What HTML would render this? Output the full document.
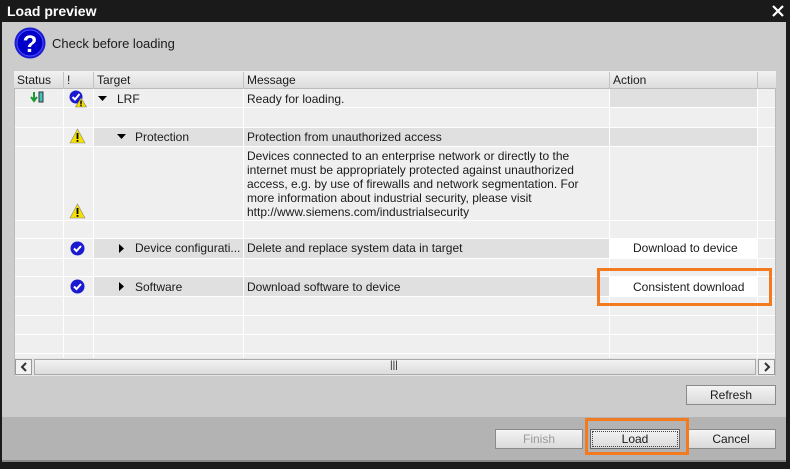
<!DOCTYPE html>
<html><head><meta charset="utf-8"><style>
*{margin:0;padding:0;box-sizing:border-box}
body{width:790px;height:469px;overflow:hidden;background:#1a1a1a;font-family:"Liberation Sans",sans-serif;font-size:12px;color:#1a1a1a;position:relative}
.a{position:absolute}
.t{white-space:nowrap}
.btn{position:absolute;height:20px;border:1px solid #8a8a8a;background:linear-gradient(#f4f4f4,#dadada);text-align:center;line-height:18px;font-size:12px}
</style></head><body>
<div class="a" style="left:0;top:0;width:790px;height:22px;background:#1a1a1a"></div>
<div class="a t" style="left:7px;top:3px;color:#fff;font-weight:bold;font-size:14px">Load preview</div>
<svg class="a" style="left:770px;top:3px" width="16" height="16"><path d="M3 3L13 13M13 3L3 13" stroke="#fff" stroke-width="2.2"/></svg>
<div class="a" style="left:2px;top:22px;width:784px;height:395px;background:#cccccc"></div>
<div class="a" style="left:2px;top:417px;width:784px;height:43px;background:#b3b3b3"></div>
<div class="a" style="left:2px;top:460px;width:784px;height:2px;background:#888"></div>
<svg class="a" style="left:14px;top:27px" width="32" height="32"><circle cx="16" cy="16" r="15.5" fill="#1a1ad0"/><circle cx="16" cy="16" r="13" fill="#0000c8" stroke="#5050ff" stroke-width="1"/><text x="16" y="25" font-family="Liberation Sans" font-weight="bold" font-size="24" fill="#fff" text-anchor="middle">?</text></svg>
<div class="a t" style="left:52px;top:36px;font-size:13px">Check before loading</div>
<!-- table -->
<div class="a" style="left:14px;top:71px;width:762px;height:305px;background:#efefef;border:1px solid #bbb"></div>
<div class="a" style="left:14px;top:71px;width:762px;height:18px;background:linear-gradient(#f2f2f2,#dcdcdc);border-bottom:1px solid #bbb"></div>
<div class="a t" style="left:17px;top:73px">Status</div>
<div class="a t" style="left:67px;top:73px">!</div>
<div class="a t" style="left:97px;top:73px">Target</div>
<div class="a t" style="left:247px;top:73px">Message</div>
<div class="a t" style="left:613px;top:73px">Action</div>
<!-- shaded rows -->
<div class="a" style="left:93px;top:128px;width:664px;height:18px;background:#e0e0e0"></div>
<div class="a" style="left:93px;top:89px;width:516px;height:18px;background:#efefef"></div>
<div class="a" style="left:609px;top:89px;width:148px;height:18px;background:#e0e0e0"></div>
<div class="a" style="left:93px;top:239px;width:664px;height:19px;background:#e0e0e0"></div>
<div class="a" style="left:93px;top:277px;width:664px;height:19px;background:#e0e0e0"></div>
<div class="a" style="left:609px;top:239px;width:148px;height:19px;background:#fff"></div>
<div class="a" style="left:609px;top:277px;width:148px;height:19px;background:#fff"></div>
<!-- row lines -->
<div class="a" style="left:15px;top:107px;width:760px;height:1px;background:#fff"></div>
<div class="a" style="left:15px;top:127px;width:760px;height:1px;background:#fff"></div>
<div class="a" style="left:15px;top:146px;width:760px;height:1px;background:#fff"></div>
<div class="a" style="left:15px;top:220px;width:760px;height:1px;background:#fff"></div>
<div class="a" style="left:15px;top:238px;width:760px;height:1px;background:#fff"></div>
<div class="a" style="left:15px;top:258px;width:760px;height:1px;background:#fff"></div>
<div class="a" style="left:15px;top:276px;width:760px;height:1px;background:#fff"></div>
<div class="a" style="left:15px;top:296px;width:760px;height:1px;background:#fff"></div>
<div class="a" style="left:15px;top:315px;width:760px;height:1px;background:#fff"></div>
<div class="a" style="left:15px;top:334px;width:760px;height:1px;background:#fff"></div>
<div class="a" style="left:15px;top:353px;width:760px;height:1px;background:#fff"></div>
<!-- col lines -->
<div class="a" style="left:63px;top:72px;width:1px;height:286px;background:#fff"></div>
<div class="a" style="left:93px;top:72px;width:1px;height:286px;background:#fff"></div>
<div class="a" style="left:243px;top:72px;width:1px;height:286px;background:#fff"></div>
<div class="a" style="left:609px;top:72px;width:1px;height:286px;background:#fff"></div>
<div class="a" style="left:757px;top:72px;width:1px;height:286px;background:#fff"></div>
<div class="a" style="left:63px;top:72px;width:1px;height:17px;background:#c4c4c4"></div>
<div class="a" style="left:93px;top:72px;width:1px;height:17px;background:#c4c4c4"></div>
<div class="a" style="left:243px;top:72px;width:1px;height:17px;background:#c4c4c4"></div>
<div class="a" style="left:609px;top:72px;width:1px;height:17px;background:#c4c4c4"></div>
<div class="a" style="left:757px;top:72px;width:1px;height:17px;background:#c4c4c4"></div>
<!-- icons -->
<svg class="a" style="left:30px;top:91px" width="14" height="14"><path d="M4 1V9M1 6L4 10L7 6" stroke="#1a9a30" stroke-width="2" fill="none"/><rect x="9" y="1" width="4" height="10" fill="#40c0c0" stroke="#333" stroke-width="1"/></svg>
<svg class="a" style="left:69px;top:90px" width="18" height="18"><circle cx="7" cy="7" r="6.5" fill="#1a1ad0"/><path d="M3.5 7L6 9.5L10.5 4" stroke="#fff" stroke-width="2" fill="none"/><path d="M12 8L17.5 17H6.5Z" fill="#f5e000" stroke="#777" stroke-width=".6"/><rect x="11.3" y="10.5" width="1.4" height="4" fill="#000"/><rect x="11.3" y="15" width="1.4" height="1.3" fill="#000"/></svg>
<svg class="a" style="left:69px;top:128px" width="17" height="16"><path d="M8.5 1L16 15H1Z" fill="#f5e000" stroke="#888" stroke-width=".6"/><rect x="7.6" y="5" width="1.8" height="6" fill="#000"/><rect x="7.6" y="12" width="1.8" height="1.8" fill="#000"/></svg>
<svg class="a" style="left:69px;top:203px" width="17" height="16"><path d="M8.5 1L16 15H1Z" fill="#f5e000" stroke="#888" stroke-width=".6"/><rect x="7.6" y="5" width="1.8" height="6" fill="#000"/><rect x="7.6" y="12" width="1.8" height="1.8" fill="#000"/></svg>
<svg class="a" style="left:70px;top:241px" width="15" height="15"><circle cx="7.5" cy="7.5" r="7" fill="#1a1ad0"/><path d="M4 7.5L6.5 10L11 5" stroke="#fff" stroke-width="2" fill="none"/></svg>
<svg class="a" style="left:70px;top:279px" width="15" height="15"><circle cx="7.5" cy="7.5" r="7" fill="#1a1ad0"/><path d="M4 7.5L6.5 10L11 5" stroke="#fff" stroke-width="2" fill="none"/></svg>
<svg class="a" style="left:98px;top:96px" width="9" height="6"><path d="M0 0H9L4.5 5Z" fill="#000"/></svg>
<svg class="a" style="left:117px;top:134px" width="9" height="6"><path d="M0 0H9L4.5 5Z" fill="#000"/></svg>
<svg class="a" style="left:119px;top:244px" width="6" height="9"><path d="M0 0V9L5 4.5Z" fill="#000"/></svg>
<svg class="a" style="left:119px;top:282px" width="6" height="9"><path d="M0 0V9L5 4.5Z" fill="#000"/></svg>
<!-- texts -->
<div class="a t" style="left:117px;top:92px">LRF</div>
<div class="a t" style="left:135px;top:130px">Protection</div>
<div class="a t" style="left:135px;top:241px">Device configurati...</div>
<div class="a t" style="left:135px;top:280px">Software</div>
<div class="a t" style="left:247px;top:92px">Ready for loading.</div>
<div class="a t" style="left:247px;top:130px">Protection from unauthorized access</div>
<div class="a" style="left:247px;top:149px;width:360px;line-height:14px">Devices connected to an enterprise network or directly to the<br>internet must be appropriately protected against unauthorized<br>access, e.g. by use of firewalls and network segmentation. For<br>more information about industrial security, please visit<br>http://www.siemens.com/industrialsecurity</div>
<div class="a t" style="left:247px;top:241px">Delete and replace system data in target</div>
<div class="a t" style="left:247px;top:280px">Download software to device</div>
<div class="a t" style="left:633px;top:241px">Download to device</div>
<div class="a t" style="left:633px;top:280px">Consistent download</div>
<div class="a" style="left:597px;top:268px;width:175px;height:38px;border:3px solid #f47a1f"></div>
<!-- scrollbar -->
<div class="a" style="left:15px;top:358px;width:760px;height:18px;background:#e6e6e6"></div>
<div class="a" style="left:15px;top:359px;width:17px;height:16px;border:1px solid #999;background:#f2f2f2"></div>
<svg class="a" style="left:19px;top:362px" width="10" height="10"><path d="M7 1L3 5L7 9" stroke="#333" stroke-width="2" fill="none"/></svg>
<div class="a" style="left:34px;top:359px;width:722px;height:16px;border:1px solid #aaa;background:linear-gradient(#f2f2f2,#dcdcdc)"></div>
<div class="a t" style="left:390px;top:360px;font-size:10px">|||</div>
<div class="a" style="left:758px;top:359px;width:17px;height:16px;border:1px solid #999;background:#f2f2f2"></div>
<svg class="a" style="left:762px;top:362px" width="10" height="10"><path d="M3 1L7 5L3 9" stroke="#333" stroke-width="2" fill="none"/></svg>
<!-- buttons -->
<div class="btn" style="left:686px;top:385px;width:90px">Refresh</div>
<div class="btn" style="left:495px;top:429px;width:88px;color:#999">Finish</div>
<div class="btn" style="left:590px;top:429px;width:90px;border-color:#666"><div style="position:absolute;left:1px;top:1px;right:1px;bottom:1px;border:1px dotted #444"></div>Load</div>
<div class="btn" style="left:686px;top:429px;width:90px">Cancel</div>
<div class="a" style="left:585px;top:418px;width:104px;height:37px;border:3px solid #f47a1f"></div>
</body></html>
